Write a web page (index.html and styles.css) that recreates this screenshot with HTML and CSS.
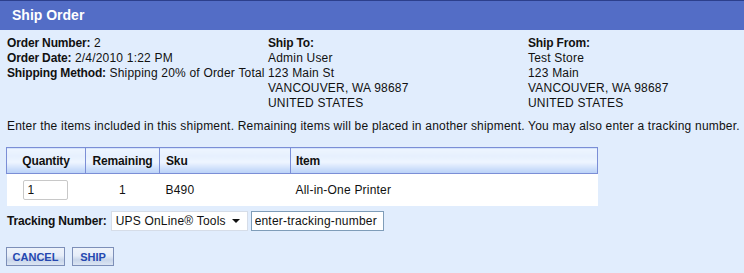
FILE: index.html
```html
<!DOCTYPE html>
<html>
<head>
<meta charset="utf-8">
<link rel="stylesheet" href="styles.css">
</head>
<body>
<div class="page">
  <div class="titlebar">Ship Order</div>
  <div class="content">
    <div class="info">
      <div class="col col-order">
        <div><b>Order Number:</b> 2</div>
        <div><b>Order Date:</b> 2/4/2010 1:22 PM</div>
        <div><b>Shipping Method:</b> Shipping 20% of Order Total</div>
      </div>
      <div class="col col-to">
        <div><b>Ship To:</b></div>
        <div>Admin User</div>
        <div>123 Main St</div>
        <div>VANCOUVER, WA 98687</div>
        <div>UNITED STATES</div>
      </div>
      <div class="col col-from">
        <div><b>Ship From:</b></div>
        <div>Test Store</div>
        <div>123 Main</div>
        <div>VANCOUVER, WA 98687</div>
        <div>UNITED STATES</div>
      </div>
    </div>
    <p class="note">Enter the items included in this shipment. Remaining items will be placed in another shipment. You may also enter a tracking number.</p>
    <table class="items">
      <thead>
        <tr>
          <th class="c-qty">Quantity</th>
          <th class="c-rem">Remaining</th>
          <th class="c-sku">Sku</th>
          <th class="c-item">Item</th>
        </tr>
      </thead>
      <tbody>
        <tr>
          <td class="c-qty"><input class="qty" type="text" value="1"></td>
          <td class="c-rem center">1</td>
          <td class="c-sku">B490</td>
          <td class="c-item">All-in-One Printer</td>
        </tr>
      </tbody>
    </table>
    <div class="tracking">
      <b>Tracking Number:</b>
      <div class="select"><span>UPS OnLine® Tools</span><span class="arrow"></span></div>
      <input class="track" type="text" value="enter-tracking-number">
    </div>
    <div class="buttons">
      <button class="btn">CANCEL</button>
      <button class="btn">SHIP</button>
    </div>
  </div>
</div>
</body>
</html>
```
FILE: styles.css
```css
html, body {
  margin: 0;
  padding: 0;
  height: 100%;
}
body {
  background: #e1edfd;
  font-family: "Liberation Sans", Arial, sans-serif;
  font-size: 12px;
  letter-spacing: 0.2px;
  color: #111;
}
b, th {
  letter-spacing: -0.15px;
}
.page {
  width: 744px;
  height: 273px;
  background: #e1edfd;
}
.titlebar {
  height: 29px;
  line-height: 29px;
  border-top: 1px solid #2c3f8c;
  background: #536dc6;
  color: #fff;
  font-weight: bold;
  font-size: 14px;
  letter-spacing: 0;
  padding-left: 12px;
}
.content {
  padding: 6px 7px 0 7px;
}
.info {
  display: grid;
  grid-template-columns: 261px 260px auto;
  line-height: 15px;
}
.note {
  margin: 8px 0 0 0;
  line-height: 15px;
  white-space: nowrap;
}
.items {
  margin-top: 13px;
  margin-left: -1px;
  width: 592px;
  border-collapse: collapse;
}
.items th {
  height: 25px;
  border: 1px solid #7b8ed6;
  background: linear-gradient(#eef5ff 0%, #e6f0fe 30%, #eef5ff 55%, #c9dcfa 85%, #b9d1f7 100%);
  font-weight: bold;
  color: #111;
  padding: 0;
}
.items th.c-qty { width: 78px; text-align: center; }
.items th.c-rem { width: 73px; text-align: center; }
.items th.c-sku { width: 124px; text-align: left; padding-left: 6px; }
.items th.c-item { text-align: left; padding-left: 5px; }
.items td {
  background: #fff;
  height: 32px;
  padding: 0;
}
.items td.c-qty { padding-left: 16px; }
.items td.center { text-align: center; }
.items td.c-sku { padding-left: 6px; }
.items td.c-item { padding-left: 5px; }
input.qty {
  box-sizing: border-box;
  width: 45px;
  height: 20px;
  border: 1px solid #c8c8c8;
  border-radius: 2px;
  font-family: "Liberation Sans", Arial, sans-serif;
  font-size: 12px;
  padding: 0 4px;
  color: #111;
  display: block;
}
.tracking {
  display: flex;
  align-items: center;
  margin-top: 5px;
  height: 20px;
}
.tracking b {
  margin-right: 4px;
}
.select {
  box-sizing: border-box;
  width: 137px;
  height: 20px;
  background: #fff;
  border: 1px solid #d6dde8;
  display: flex;
  align-items: center;
  justify-content: space-between;
  padding: 0 7px 0 4px;
  font-size: 12px;
}
.arrow {
  width: 0;
  height: 0;
  border-left: 4px solid transparent;
  border-right: 4px solid transparent;
  border-top: 4px solid #111;
}
input.track {
  box-sizing: border-box;
  margin-left: 3px;
  width: 133px;
  height: 20px;
  border: 1px solid #7f9db9;
  font-family: "Liberation Sans", Arial, sans-serif;
  font-size: 12px;
  letter-spacing: 0.2px;
  padding: 0 3px;
  color: #111;
}
.buttons {
  display: flex;
  gap: 7px;
  margin-top: 16px;
  margin-left: -1px;
}
.btn {
  box-sizing: border-box;
  height: 19px;
  padding: 0;
  border: 1px solid #7d8fb8;
  background: linear-gradient(#eef3fb 0%, #e6edf8 45%, #c9d6ea 70%, #dbe5f3 100%);
  color: #2548b0;
  font-family: "Liberation Sans", Arial, sans-serif;
  font-weight: bold;
  font-size: 11px;
  letter-spacing: 0;
  cursor: pointer;
}
.btn:first-child { width: 59px; }
.btn:last-child { width: 42px; }
```
